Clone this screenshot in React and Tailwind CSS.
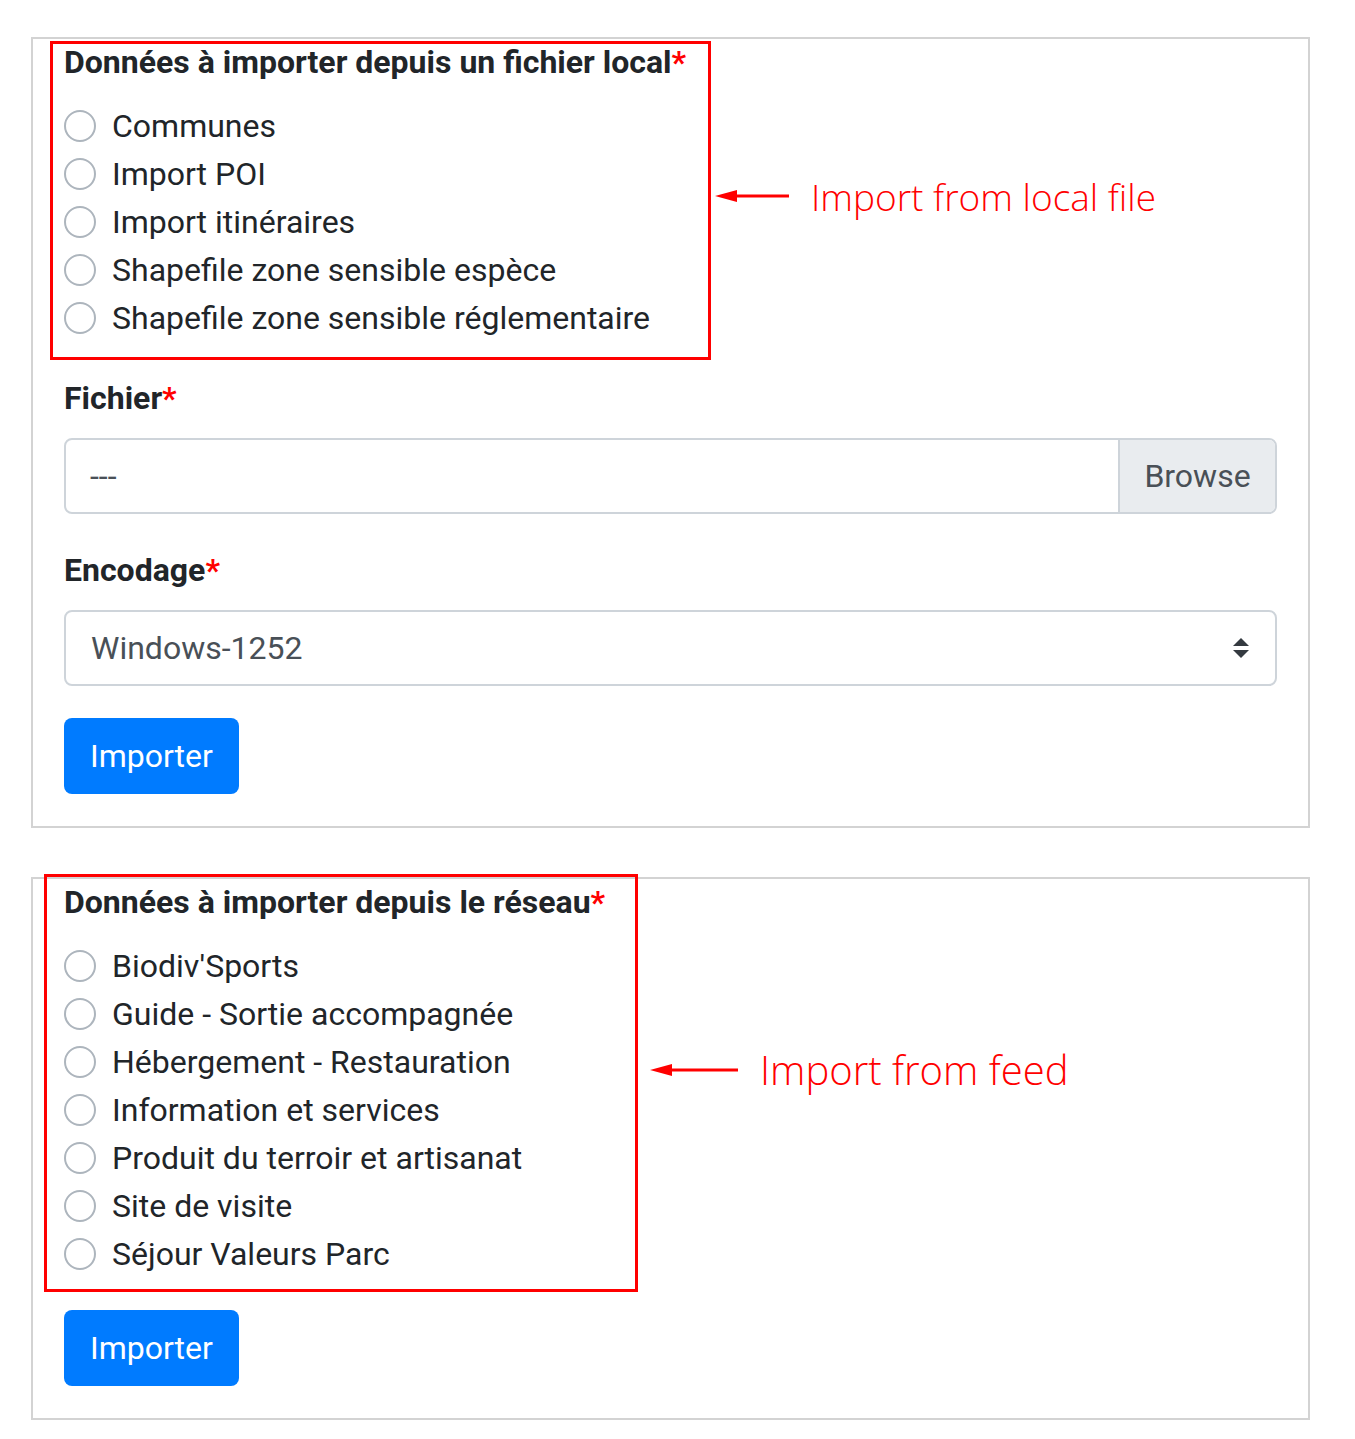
const localOptions = [
  'Communes',
  'Import POI',
  'Import itinéraires',
  'Shapefile zone sensible espèce',
  'Shapefile zone sensible réglementaire',
]

const feedOptions = [
  "Biodiv'Sports",
  'Guide - Sortie accompagnée',
  'Hébergement - Restauration',
  'Information et services',
  'Produit du terroir et artisanat',
  'Site de visite',
  'Séjour Valeurs Parc',
]

const Required = () => <span className="text-[#ff0000]">*</span>

const Radio = ({ label }) => (
  <label className="flex h-12 items-center">
    <span className="block h-8 w-8 rounded-full border-2 border-[#adb5bd] bg-white" />
    <span className="ml-4 text-[32px] text-[#212529]">{label}</span>
  </label>
)

// red annotation: arrow pointing left + label
const Note = ({ text, arrow, textClass, className }) => (
  <div className={`absolute flex h-10 items-center ${className}`}>
    <svg width={arrow} height="16" viewBox={`0 0 ${arrow} 16`} className="shrink-0">
      <path d="M0 8 L22 2 L22 14 Z" fill="#ff0000" />
      <path d={`M20 8 H${arrow}`} stroke="#ff0000" strokeWidth="3" />
    </svg>
    <span
      className={`ml-[22px] font-['Open_Sans',sans-serif] font-light leading-none text-[#ff0000] ${textClass}`}
    >
      {text}
    </span>
  </div>
)

const ImportButton = () => (
  <button className="mt-8 h-[76px] rounded-lg bg-[#007bff] px-[26px] text-[32px] text-white">
    Importer
  </button>
)

export default function App() {
  return (
    <div className="min-h-[1439px] bg-white pt-[37px] font-['Roboto',sans-serif] text-[#212529]">
      <div className="relative ml-[31px] w-[1279px] border-2 border-[#d3d3d3] px-[31px] pb-[32px]">
        <div className="pointer-events-none absolute left-[17px] top-[2px] h-[319px] w-[661px] border-[3px] border-[#ff0000]" />
        <Note
          text="Import from local file"
          arrow={74}
          textClass="text-[37px]"
          className="left-[682px] top-[137px]"
        />
        <div className="text-[32px] font-bold leading-[47px]">
          Données à importer depuis un fichier local<Required />
        </div>
        <div className="mt-4 flex flex-col">
          {localOptions.map((o) => (
            <Radio key={o} label={o} />
          ))}
        </div>

        <div className="mt-8 text-[32px] font-bold leading-[48px]">
          Fichier<Required />
        </div>
        <div className="mt-4 flex h-[76px] overflow-hidden rounded-lg border-2 border-[#ced4da] text-[32px] text-[#495057]">
          <div className="flex flex-1 items-center pl-[24px]">---</div>
          <div className="flex w-[157px] items-center justify-center border-l-2 border-[#ced4da] bg-[#e9ecef]">
            Browse
          </div>
        </div>

        <div className="mt-8 text-[32px] font-bold leading-[48px]">
          Encodage<Required />
        </div>
        <div className="mt-4 flex h-[76px] items-center justify-between rounded-lg border-2 border-[#ced4da] pl-[25px] pr-[25px] text-[32px] text-[#495057]">
          <span>Windows-1252</span>
          <svg width="18" height="22" viewBox="0 0 18 22">
            <path d="M9 1 L17 9 H1 Z M9 21 L17 13 H1 Z" fill="#343a40" />
          </svg>
        </div>

        <ImportButton />
      </div>

      <div className="relative ml-[31px] mt-[49px] w-[1279px] border-2 border-[#d3d3d3] px-[31px] pb-[32px]">
        <div className="pointer-events-none absolute left-[11px] top-[-5px] h-[418px] w-[594px] border-[3px] border-[#ff0000]" />
        <Note
          text="Import from feed"
          arrow={88}
          textClass="text-[40px]"
          className="left-[617px] top-[171px]"
        />
        <div className="text-[32px] font-bold leading-[47px]">
          Données à importer depuis le réseau<Required />
        </div>
        <div className="mt-4 flex flex-col">
          {feedOptions.map((o) => (
            <Radio key={o} label={o} />
          ))}
        </div>
        <ImportButton />
      </div>
    </div>
  )
}
